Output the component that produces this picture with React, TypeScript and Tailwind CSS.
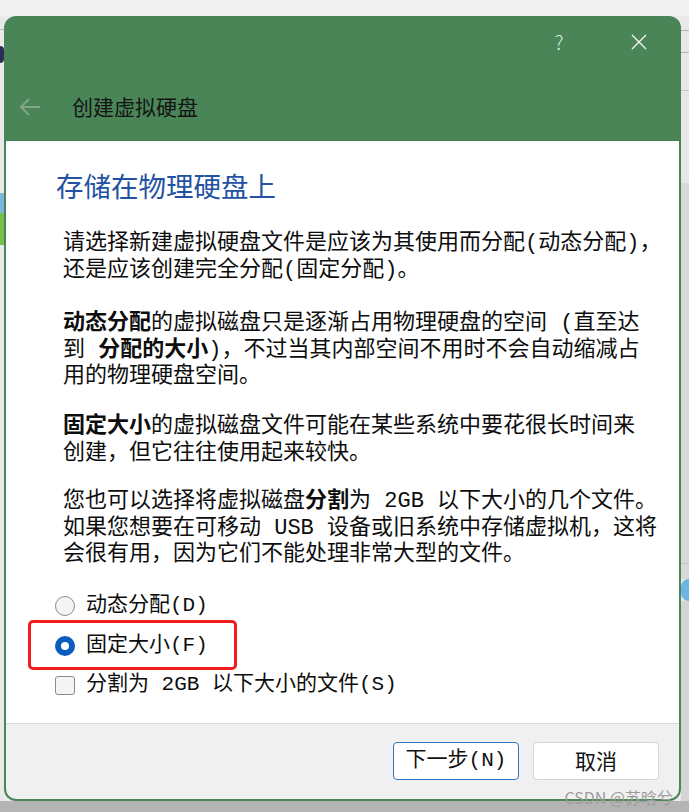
import React from "react";

const sans = "font-['Noto_Sans_CJK_SC','Noto_Sans',sans-serif]";
const body = "font-['Liberation_Mono','Noto_Sans_CJK_SC',monospace]";

function Line({ children }: { children: React.ReactNode }) {
  return <div className="h-[26.5px] leading-[26.5px] whitespace-nowrap">{children}</div>;
}

export default function App() {
  return (
    <div className="relative w-[689px] h-[812px] overflow-hidden flex flex-col bg-[#ececec]">
      {/* top strip */}
      <div className="h-[16px] bg-[#f1f1f1] shrink-0" />
      <div className="flex shrink-0">
        {/* left strip */}
        <div className="w-[4px] h-[785px] bg-[#e9e9e9] flex flex-col">
          <div className="h-[13px]" />
          <div className="h-[1px] bg-[#b9b9b9]" />
          <div className="h-[16px]" />
          <div className="h-[17px] bg-[#2b2f55] rounded-r-full" />
          <div className="h-[130px]" />
          <div className="h-[20px] bg-[#7cb6de]" />
          <div className="h-[32px] bg-[#78c04a]" />
        </div>
        {/* window */}
        <div className="w-[677px] h-[785px] rounded-[12px] bg-[#4a8558] flex flex-col overflow-hidden">
          {/* title bar */}
          <div className="h-[125px] shrink-0 flex flex-col border-b border-[#477d55]">
            <div className="h-[52px] flex items-center justify-end pr-[34px] gap-[64px]">
              <span className={`${sans} w-[16px] text-center text-[20px] font-light text-[#dfe9e1] leading-none`}>?</span>
              <svg width="16" height="16" viewBox="0 0 16 16">
                <path d="M1 1 L15 15 M15 1 L1 15" stroke="#f2f5f2" strokeWidth="1.4" fill="none" />
              </svg>
            </div>
            <div className="flex-1 pt-[5px] pl-[14px] flex items-center gap-[30px]">
              <svg width="24" height="24" viewBox="0 0 24 24">
                <path d="M22 12 H3 M11 4 L3 12 L11 20" stroke="#84a48b" strokeWidth="2" fill="none" />
              </svg>
              <span className={`${sans} text-[21px] text-[#141414] leading-none`}>创建虚拟硬盘</span>
            </div>
          </div>
          {/* content */}
          <div className="relative mx-[2px] h-[582px] bg-white shrink-0 pt-[26px]">
            <div className={`${sans} pl-[50px] text-[27.5px] leading-[36px] text-[#2452a2] whitespace-nowrap`}>
              存储在物理硬盘上
            </div>
            <div className={`${body} pl-[57px] text-[22px] text-[#0d0d0d]`}>
              <div className="mt-[28px]">
                <Line>请选择新建虚拟硬盘文件是应该为其使用而分配(动态分配)，</Line>
                <Line>还是应该创建完全分配(固定分配)。</Line>
              </div>
              <div className="mt-[27px]">
                <Line>
                  <b className="font-bold">动态分配</b>的虚拟磁盘只是逐渐占用物理硬盘的空间 (直至达
                </Line>
                <Line>
                  到 <b className="font-bold">分配的大小</b>)，不过当其内部空间不用时不会自动缩减占
                </Line>
                <Line>用的物理硬盘空间。</Line>
              </div>
              <div className="mt-[23.5px]">
                <Line>
                  <b className="font-bold">固定大小</b>的虚拟磁盘文件可能在某些系统中要花很长时间来
                </Line>
                <Line>创建，但它往往使用起来较快。</Line>
              </div>
              <div className="mt-[22px]">
                <Line>
                  您也可以选择将虚拟磁盘<b className="font-bold">分割</b>为 2GB 以下大小的几个文件。
                </Line>
                <Line>如果您想要在可移动 USB 设备或旧系统中存储虚拟机，这将</Line>
                <Line>会很有用，因为它们不能处理非常大型的文件。</Line>
              </div>
            </div>
            {/* options */}
            <div className={`${body} mt-[17px] pl-[49px] text-[21px] text-[#0d0d0d]`}>
              <div className="h-[40px] flex items-center gap-[11px]">
                <div className="w-[20px] h-[20px] rounded-full border border-[#8a8a8a] bg-[#f4f4f4]" />
                <span className="whitespace-nowrap">动态分配(D)</span>
              </div>
              <div className="h-[40px] flex items-center gap-[11px]">
                <div className="w-[20px] h-[20px] rounded-full bg-[#0a5cbd] flex items-center justify-center">
                  <div className="w-[8px] h-[8px] rounded-full bg-white" />
                </div>
                <span className="whitespace-nowrap">固定大小(F)</span>
              </div>
              <div className="h-[39px] flex items-center gap-[11px]">
                <div className="w-[20px] h-[19px] rounded-[3px] border border-[#8a8a8a] bg-[#f4f4f4]" />
                <span className="whitespace-nowrap">分割为 2GB 以下大小的文件(S)</span>
              </div>
            </div>
            {/* red annotation box */}
            <div className="absolute left-[22px] top-[479px] w-[209px] h-[50px] rounded-[5px] border-[3px] border-[#f21d1d]" />
          </div>
          {/* footer */}
          <div className="mx-[2px] mb-[2px] flex-1 bg-[#f0f0f0] border-t border-[#d8d8d8] rounded-b-[10px] pt-[18px] pr-[20px] flex justify-end gap-[14px]">
            <button className={`${body} w-[126px] h-[38px] rounded-[4px] bg-white border border-[#2f77c3] text-[21px] text-[#111] flex items-center justify-center`}>
              下一步(N)
            </button>
            <button className={`${sans} w-[126px] h-[38px] rounded-[4px] bg-white border border-[#d4d4d4] text-[21px] text-[#111] flex items-center justify-center`}>
              取消
            </button>
          </div>
        </div>
        {/* right strip */}
        <div className="w-[8px] h-[785px] bg-[#e8e8e8] flex flex-col">
          <div className="h-[14px]" />
          <div className="h-[1px] bg-[#b4b4b4]" />
          <div className="h-[21px]" />
          <div className="h-[1px] bg-[#b4b4b4]" />
          <div className="h-[37px]" />
          <div className="h-[1px] bg-[#c4c4c4]" />
          <div className="h-[92px]" />
          <div className="h-[380px] bg-[#d9d9d9]" />
          <div className="h-[1px] bg-[#c0c0c0]" />
          <div className="h-[15px] bg-[#d9d9d9]" />
          <div className="h-[22px] bg-[#6fb3e3] rounded-l-full" />
          <div className="h-[200px] bg-[#d4d4d4]" />
        </div>
      </div>
      {/* bottom strip */}
      <div className="flex-1 bg-[#b4b4b4]" />
      {/* watermark */}
      <div className={`${sans} absolute right-[16px] bottom-[7px] text-[16px] leading-none text-[#9c9c9c] whitespace-nowrap`}>
        CSDN @苏晗兮
      </div>
    </div>
  );
}
